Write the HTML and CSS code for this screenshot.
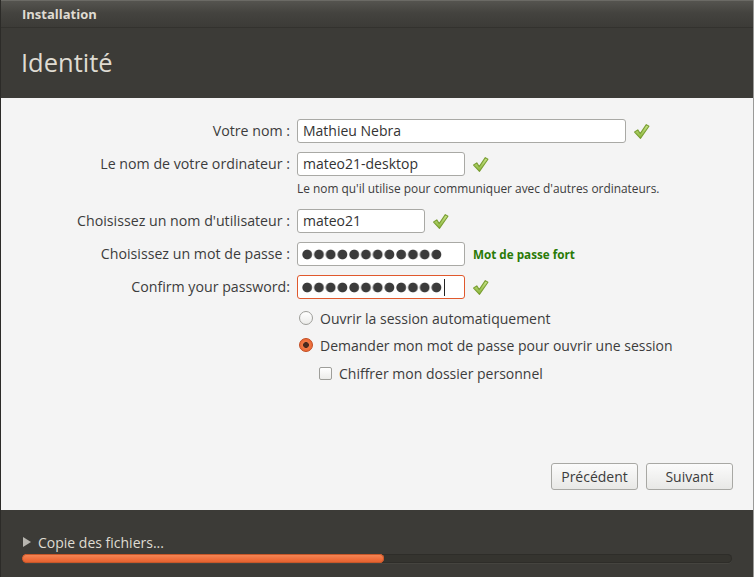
FILE: index.html
```html
<!DOCTYPE html>
<html lang="fr">
<head>
<meta charset="utf-8">
<title>Installation</title>
<link rel="stylesheet" href="styles.css">
</head>
<body>
<svg width="0" height="0" class="defs">
  <defs>
    <linearGradient id="gchk" x1="0" y1="0" x2="0" y2="1">
      <stop offset="0" stop-color="#c9e58a"/>
      <stop offset="1" stop-color="#8ab63a"/>
    </linearGradient>
    <symbol id="check" viewBox="0 0 16 16">
      <path d="M1.5 8.5 L4.5 6.5 L6.8 10 L12.5 1.5 L15 3 L7 14.5 Z" fill="url(#gchk)" stroke="#7a9e33" stroke-width="1" stroke-linejoin="round"/>
    </symbol>
  </defs>
</svg>
<div class="window">
  <div class="titlebar">Installation</div>
  <div class="header"><h1 class="title">Identité</h1></div>
  <div class="content">
    <div class="form">
      <label class="lbl">Votre nom :</label>
      <div class="field"><div class="input w-name">Mathieu Nebra</div><svg class="chk"><use href="#check"/></svg></div>

      <label class="lbl">Le nom de votre ordinateur :</label>
      <div class="fieldcol">
        <div class="field"><div class="input w-mid">mateo21-desktop</div><svg class="chk"><use href="#check"/></svg></div>
        <div class="hint">Le nom qu'il utilise pour communiquer avec d'autres ordinateurs.</div>
      </div>

      <label class="lbl">Choisissez un nom d'utilisateur :</label>
      <div class="field"><div class="input w-user">mateo21</div><svg class="chk"><use href="#check"/></svg></div>

      <label class="lbl">Choisissez un mot de passe :</label>
      <div class="field"><div class="input w-mid pw"><span class="mask"></span></div><span class="strength">Mot de passe fort</span></div>

      <label class="lbl">Confirm your password:</label>
      <div class="field"><div class="input w-mid pw focus"><span class="mask"></span><span class="caret"></span></div><svg class="chk"><use href="#check"/></svg></div>

      <div class="spacer"></div>
      <div class="options">
        <div class="opt"><span class="radio"></span><span>Ouvrir la session automatiquement</span></div>
        <div class="opt"><span class="radio on"></span><span>Demander mon mot de passe pour ouvrir une session</span></div>
        <div class="opt sub"><span class="checkbox"></span><span>Chiffrer mon dossier personnel</span></div>
      </div>
    </div>
    <div class="buttons">
      <button class="btn">Précédent</button>
      <button class="btn">Suivant</button>
    </div>
  </div>
  <div class="footer">
    <div class="status"><span class="tri"></span><span>Copie des fichiers...</span></div>
    <div class="progress"><div class="bar" style="width:51%"></div></div>
  </div>
</div>
</body>
</html>
```
FILE: styles.css
```css
html, body {
  margin: 0;
  padding: 0;
  width: 754px;
  height: 577px;
  overflow: hidden;
  background: #8a8a8a;
}
.defs { position: absolute; }
.window {
  width: 754px;
  height: 577px;
  display: flex;
  flex-direction: column;
  font-family: "Open Sans", "DejaVu Sans", sans-serif;
  font-size: 14px;
  color: #3c3c3c;
  border-left: 1px solid #2c2b28;
  border-right: 1px solid #9a9a98;
  box-sizing: border-box;
}
.titlebar {
  height: 28px;
  box-sizing: border-box;
  border-top: 1px solid #6b6a65;
  border-bottom: 1px solid #33322e;
  background: linear-gradient(#55544f, #44433f 45%, #3c3b37);
  color: #dfdbd2;
  font-weight: bold;
  font-size: 13px;
  line-height: 26px;
  padding-left: 21px;
}
.header {
  height: 70px;
  background: #3c3b37;
  display: flex;
  align-items: center;
  padding-left: 20px;
}
.title {
  margin: 0;
  font-weight: normal;
  font-size: 25.5px;
  color: #dfdbd2;
  position: relative;
  top: -1px;
}
.content {
  flex: 1;
  background: #f4f4f4;
  display: flex;
  flex-direction: column;
  padding: 21px 20px 20px 0;
}
.form {
  display: grid;
  grid-template-columns: 289px auto;
  column-gap: 7px;
  row-gap: 9px;
}
.lbl {
  text-align: right;
  line-height: 24px;
  align-self: start;
  font-size: 14.2px;
}
.field {
  display: flex;
  align-items: center;
  height: 24px;
}
.fieldcol { display: flex; flex-direction: column; }
.input {
  box-sizing: border-box;
  height: 24px;
  border: 1px solid #a9a9a5;
  border-radius: 3px;
  background: #fff;
  padding: 0 5px;
  line-height: 22px;
  font-size: 14px;
  color: #333;
  white-space: nowrap;
  overflow: hidden;
  position: relative;
}
.w-name { width: 329px; }
.w-mid { width: 168px; }
.w-user { width: 128px; }
.pw {
  display: flex;
  align-items: center;
  padding-left: 4px;
}
.mask {
  width: 141px;
  height: 11px;
  background-image: radial-gradient(circle at 5.2px 5.5px, #3b3b3b 4.4px, rgba(59,59,59,0) 5.3px);
  background-size: 11.75px 11px;
  background-repeat: repeat-x;
}
.focus { border-color: #e0592d; }
.caret {
  width: 1px;
  height: 17px;
  background: #222;
  margin-left: 1px;
}
.chk { width: 17px; height: 17px; margin-left: 7px; }
.strength {
  margin-left: 8px;
  color: #2a7a06;
  font-weight: bold;
  font-size: 11.7px;
}
.hint {
  font-size: 11.9px;
  line-height: 14px;
  margin: 5px 0 5px 0;
  color: #3c3c3c;
}
.spacer { height: 1px; }
.options {
  display: flex;
  flex-direction: column;
  gap: 7px;
  margin-top: 0;
  padding-left: 2px;
}
.opt {
  display: flex;
  align-items: center;
  height: 20px;
  font-size: 14px;
  gap: 7px;
}
.opt.sub { padding-left: 20px; margin-top: 1px; }
.radio {
  width: 14px;
  height: 14px;
  border-radius: 50%;
  border: 1px solid #9e9e9a;
  background: linear-gradient(#fff, #ececea);
  box-sizing: border-box;
}
.radio.on {
  border-color: #c24a1e;
  background: radial-gradient(circle, #4a2a1e 0 2.6px, #f07a46 3.2px, #e85d2a 100%);
}
.checkbox {
  width: 13px;
  height: 13px;
  border: 1px solid #9e9e9a;
  border-radius: 2px;
  background: linear-gradient(#fff, #ececea);
  box-sizing: border-box;
}
.buttons {
  margin-top: auto;
  display: flex;
  justify-content: flex-end;
  gap: 8px;
}
.btn {
  width: 87px;
  height: 27px;
  border: 1px solid #a8a8a4;
  border-radius: 3px;
  background: linear-gradient(#fbfbfb, #e8e8e6);
  font-family: "Open Sans", "DejaVu Sans", sans-serif;
  font-size: 14px;
  color: #3c3c3c;
  padding: 0;
}
.footer {
  height: 67px;
  background: #3c3b37;
  box-sizing: border-box;
  padding: 20px 21px 0 21px;
}
.status {
  display: flex;
  align-items: center;
  gap: 7px;
  color: #dfdbd2;
  font-size: 14px;
  height: 24px;
  padding-left: 1px;
}
.tri {
  width: 0;
  height: 0;
  border-top: 5px solid transparent;
  border-bottom: 5px solid transparent;
  border-left: 8px solid #b8b6b0;
}
.progress {
  height: 9px;
  border-radius: 5px;
  background: #35342f;
  box-shadow: inset 0 0 0 1px #2e2d29, 0 1px 0 #45443f;
  overflow: hidden;
}
.bar {
  height: 100%;
  border-radius: 5px;
  background: linear-gradient(#f58a5a, #ef6d3a 60%, #e15f2d);
  box-shadow: inset 0 0 0 1px #c8572a;
}
```
